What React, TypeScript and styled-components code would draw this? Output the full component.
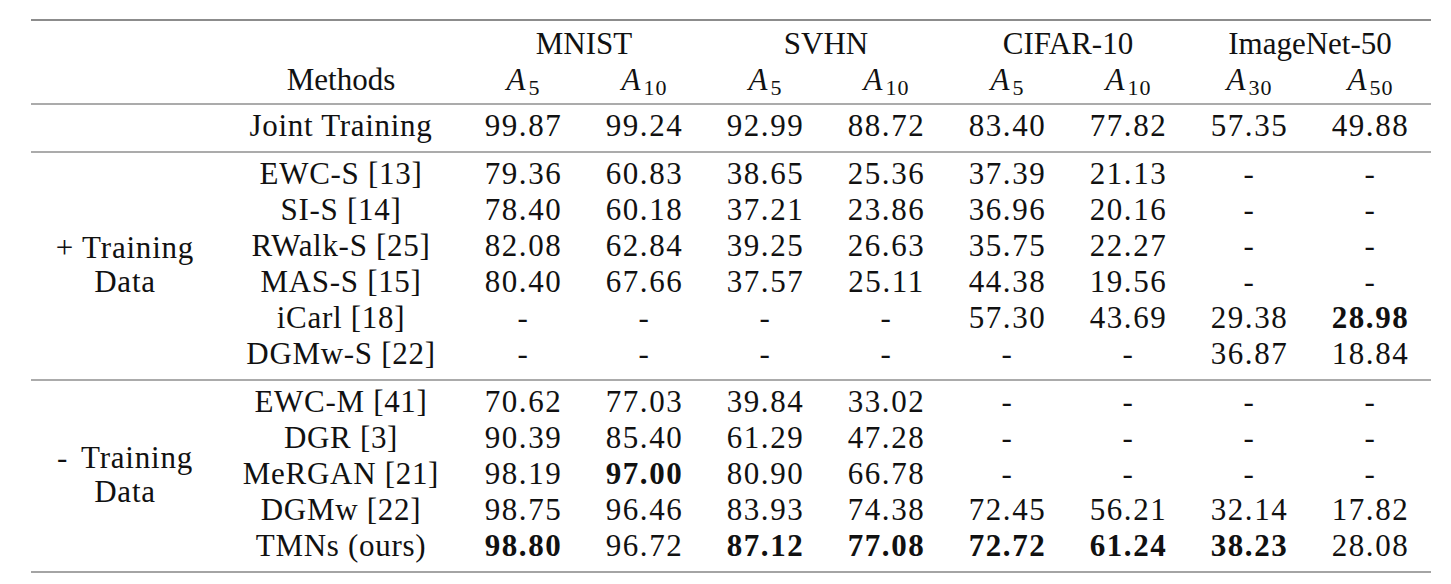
import React from "react";
import styled, { createGlobalStyle } from "styled-components";

const GlobalStyle = createGlobalStyle`
  html, body {
    margin: 0;
    padding: 0;
    background: #fff;
  }
  body {
    font-family: "Liberation Serif", "Times New Roman", serif;
    color: #111;
  }
`;

const COLS = "188px 244px repeat(8, 121px)";

type Val = string | { b: string };

interface Row {
  method: string;
  values: Val[];
}

interface Group {
  sign?: string;
  label?: string;
  rows: Row[];
}

const datasets = ["MNIST", "SVHN", "CIFAR-10", "ImageNet-50"];
const subs = ["5", "10", "5", "10", "5", "10", "30", "50"];

const groups: Group[] = [
  {
    rows: [
      {
        method: "Joint Training",
        values: ["99.87", "99.24", "92.99", "88.72", "83.40", "77.82", "57.35", "49.88"],
      },
    ],
  },
  {
    sign: "+",
    label: "Training",
    rows: [
      { method: "EWC-S [13]", values: ["79.36", "60.83", "38.65", "25.36", "37.39", "21.13", "-", "-"] },
      { method: "SI-S [14]", values: ["78.40", "60.18", "37.21", "23.86", "36.96", "20.16", "-", "-"] },
      { method: "RWalk-S [25]", values: ["82.08", "62.84", "39.25", "26.63", "35.75", "22.27", "-", "-"] },
      { method: "MAS-S [15]", values: ["80.40", "67.66", "37.57", "25.11", "44.38", "19.56", "-", "-"] },
      { method: "iCarl [18]", values: ["-", "-", "-", "-", "57.30", "43.69", "29.38", { b: "28.98" }] },
      { method: "DGMw-S [22]", values: ["-", "-", "-", "-", "-", "-", "36.87", "18.84"] },
    ],
  },
  {
    sign: "-",
    label: "Training",
    rows: [
      { method: "EWC-M [41]", values: ["70.62", "77.03", "39.84", "33.02", "-", "-", "-", "-"] },
      { method: "DGR [3]", values: ["90.39", "85.40", "61.29", "47.28", "-", "-", "-", "-"] },
      { method: "MeRGAN [21]", values: ["98.19", { b: "97.00" }, "80.90", "66.78", "-", "-", "-", "-"] },
      { method: "DGMw [22]", values: ["98.75", "96.46", "83.93", "74.38", "72.45", "56.21", "32.14", "17.82"] },
      {
        method: "TMNs (ours)",
        values: [{ b: "98.80" }, "96.72", { b: "87.12" }, { b: "77.08" }, { b: "72.72" }, { b: "61.24" }, { b: "38.23" }, "28.08"],
      },
    ],
  },
];

const Page = styled.div`
  padding: 19px 0 0 31px;
`;

const Table = styled.div`
  width: 1400px;
  border-top: 2px solid #8c8c8c;
  border-bottom: 2px solid #a4a4a4;
  font-size: 31px;
`;

const Section = styled.div<{ $ruled?: boolean }>`
  display: grid;
  grid-template-columns: ${COLS};
  grid-auto-rows: 36px;
  padding: 5px 0;
  border-top: ${(p) => (p.$ruled ? "2px solid #ababab" : "none")};
`;

const Cell = styled.div<{ $span?: number }>`
  line-height: 30px;
  padding: 1px 0 5px;
  text-align: center;
  white-space: nowrap;
  letter-spacing: 0.7px;
  grid-column: ${(p) => (p.$span ? `span ${p.$span}` : "auto")};
`;

const HeadCell = styled(Cell)`
  padding: 3px 0 3px;
  letter-spacing: 0;
`;

const Value = styled(Cell)<{ $bold?: boolean }>`
  letter-spacing: 1.6px;
  font-weight: ${(p) => (p.$bold ? 700 : 400)};
`;

const GroupLabel = styled.div<{ $rows: number }>`
  grid-column: 1;
  grid-row: 1 / span ${(p) => p.$rows};
  align-self: center;
  text-align: center;
  line-height: 34px;
  letter-spacing: 0.8px;
  padding-bottom: 2px;
`;

const Sign = styled.span<{ $gap: number }>`
  margin-right: ${(p) => p.$gap}px;
`;

const MathVar = styled.span`
  font-style: italic;
`;

const Sub = styled.sub`
  font-style: normal;
  font-size: 22px;
  line-height: 0;
  vertical-align: -5px;
  margin-left: 3px;
  letter-spacing: 1px;
`;

const ValueCell: React.FC<{ v: Val }> = ({ v }) =>
  typeof v === "string" ? <Value>{v}</Value> : <Value $bold>{v.b}</Value>;

export default function App() {
  return (
    <Page>
      <GlobalStyle />
      <Table>
        <Section>
          <HeadCell />
          <HeadCell />
          {datasets.map((d) => (
            <HeadCell key={d} $span={2}>
              {d}
            </HeadCell>
          ))}
          <HeadCell />
          <HeadCell>Methods</HeadCell>
          {subs.map((s, i) => (
            <HeadCell key={i}>
              <MathVar>A</MathVar>
              <Sub>{s}</Sub>
            </HeadCell>
          ))}
        </Section>
        {groups.map((g, gi) => (
          <Section key={gi} $ruled>
            {g.label ? (
              <GroupLabel $rows={g.rows.length}>
                <Sign $gap={g.sign === "-" ? 13 : 8}>{g.sign}</Sign>
                {g.label}
                <br />
                Data
              </GroupLabel>
            ) : null}
            {g.rows.map((r) => (
              <React.Fragment key={r.method}>
                {!g.label && <Cell />}
                <Cell>{r.method}</Cell>
                {r.values.map((v, i) => (
                  <ValueCell key={i} v={v} />
                ))}
              </React.Fragment>
            ))}
          </Section>
        ))}
      </Table>
    </Page>
  );
}
